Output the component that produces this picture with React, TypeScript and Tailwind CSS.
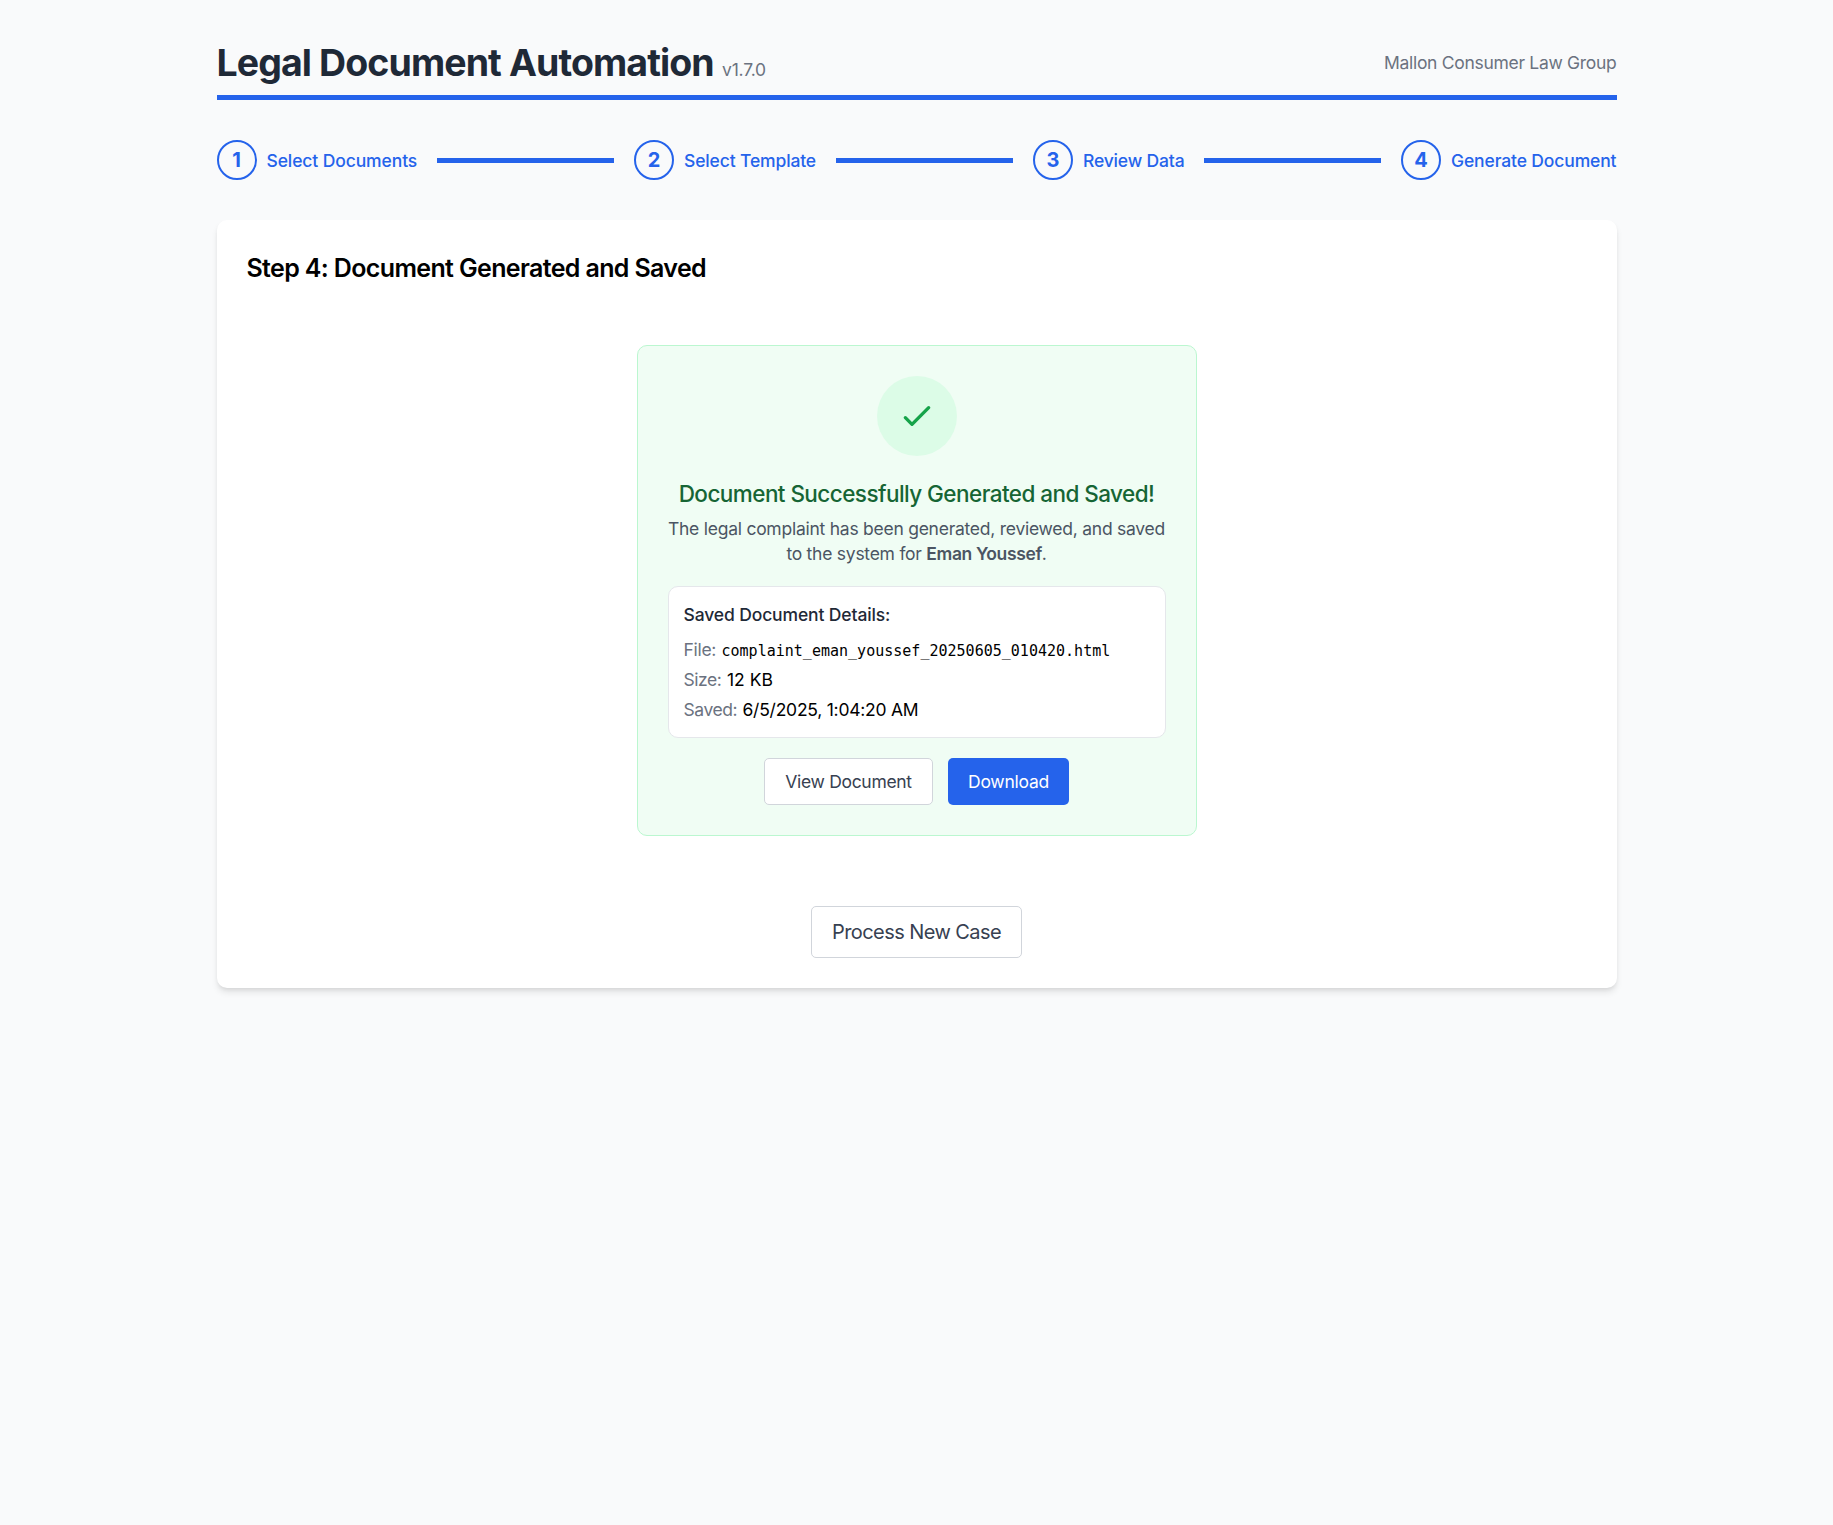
import { Fragment } from 'react';

const steps = [
  { label: 'Select Documents', style: 'w-[150.5px] tracking-[-0.11px]' },
  { label: 'Select Template', style: 'w-[132px] tracking-[-0.14px]' },
  { label: 'Review Data', style: 'w-[101px] tracking-[-0.16px]' },
  { label: 'Generate Document', style: 'w-[165.5px] tracking-[-0.13px]' },
];

function Header() {
  return (
    <header className="flex items-center justify-between border-b-[5px] border-[#2563eb] pb-2.5">
      <div className="flex items-baseline whitespace-nowrap">
        <h1 className="w-[505.5px] text-[37.5px] leading-[45px] font-bold tracking-[-0.91px] text-[#1f2937]">
          Legal Document Automation
        </h1>
        <span className="text-[17.5px] leading-[25px] tracking-[-0.2px] text-[#6b7280]">v1.7.0</span>
      </div>
      <p className="text-[17.5px] leading-[25px] tracking-[-0.3px] text-[#6b7280]">Mallon Consumer Law Group</p>
    </header>
  );
}

function Stepper() {
  return (
    <nav className="mt-10 flex items-center text-[#2563eb]">
      {steps.map((step, i) => (
        <Fragment key={step.label}>
          {i > 0 && <div className="mx-5 h-[5px] flex-1 bg-[#2563eb]" />}
          <div className="flex size-10 items-center justify-center rounded-full border-2 border-[#2563eb] text-[20px] leading-[30px] font-bold">
            {i + 1}
          </div>
          <span className="ml-2.5 text-[17.5px] leading-[25px] font-medium whitespace-nowrap">
            <span className={`block ${step.style}`}>{step.label}</span>
          </span>
        </Fragment>
      ))}
    </nav>
  );
}

function SavedDetails() {
  return (
    <div className="mt-5 rounded-[10px] border border-[#e5e7eb] bg-white p-[15px] text-left text-[17.5px] leading-[25px] text-black">
      <h4 className="mb-2.5 font-medium tracking-[-0.127px] text-[#1f2937]">Saved Document Details:</h4>
      <dl className="flex flex-col gap-[5px] whitespace-nowrap">
        <div className="flex h-[25px] items-baseline">
          <dt className="w-[38px] tracking-[-0.3px] text-[#6b7280]">File:</dt>
          <dd className="font-['DejaVu_Sans_Mono',monospace] text-[15px] tracking-[0.01px]">
            complaint_eman_youssef_20250605_010420.html
          </dd>
        </div>
        <div className="flex items-baseline">
          <dt className="w-[43.5px] tracking-[-0.45px] text-[#6b7280]">Size:</dt>
          <dd>12 KB</dd>
        </div>
        <div className="flex items-baseline">
          <dt className="w-[59px] tracking-[-0.45px] text-[#6b7280]">Saved:</dt>
          <dd className="tracking-[-0.24px]">6/5/2025, 1:04:20 AM</dd>
        </div>
      </dl>
    </div>
  );
}

function SuccessPanel() {
  return (
    <section className="mx-auto w-[560px] rounded-[10px] border border-[#bbf7d0] bg-[#f0fdf4] p-[30px] text-center">
      <div className="mx-auto mb-5 flex size-20 items-center justify-center rounded-full bg-[#dcfce7]">
        <svg className="size-10 text-[#16a34a]" viewBox="0 0 24 24" fill="none" stroke="currentColor">
          <path strokeLinecap="round" strokeLinejoin="round" strokeWidth={2} d="M5 13l4 4L19 7" />
        </svg>
      </div>
      <h3 className="text-[22.5px] leading-[35px] font-medium tracking-[-0.56px] whitespace-nowrap text-[#166534]">
        Document Successfully Generated and Saved!
      </h3>
      <p className="mt-[5px] text-[17.5px] leading-[25px] tracking-[-0.25px] whitespace-nowrap text-[#4b5563]">
        The legal complaint has been generated, reviewed, and saved
        <br />
        to the system for <strong className="font-semibold tracking-[-0.38px]">Eman Youssef</strong>.
      </p>
      <SavedDetails />
      <div className="mt-5 flex justify-center gap-[15px] text-[17.5px] leading-[25px]">
        <button className="h-[47px] w-[169px] rounded-[5px] border border-[#d1d5db] bg-white tracking-[-0.3px] text-[#374151]">
          View Document
        </button>
        <button className="h-[47px] w-[121px] rounded-[5px] bg-[#2563eb] tracking-[-0.25px] text-white">Download</button>
      </div>
    </section>
  );
}

export default function App() {
  return (
    <div className="min-h-screen bg-[#f9fafb] font-[Inter,sans-serif]">
      <div className="mx-auto w-[1400px] pt-10">
        <Header />
        <Stepper />
        <main className="mt-10 rounded-[10px] bg-white p-[30px] shadow-[0_5px_7.5px_-1.25px_rgba(0,0,0,0.1),0_2.5px_5px_-2.5px_rgba(0,0,0,0.1)]">
          <h2 className="mb-[19px] pt-px text-[25px] leading-[35px] font-semibold tracking-[-0.64px] text-black">
            Step 4: Document Generated and Saved
          </h2>
          <div className="py-10">
            <SuccessPanel />
          </div>
          <div className="mt-[30px] flex justify-center">
            <button className="h-[52px] w-[211px] rounded-[5px] border border-[#d1d5db] bg-white text-[20px] leading-[30px] tracking-[-0.57px] text-[#374151]">
              Process New Case
            </button>
          </div>
        </main>
      </div>
    </div>
  );
}
